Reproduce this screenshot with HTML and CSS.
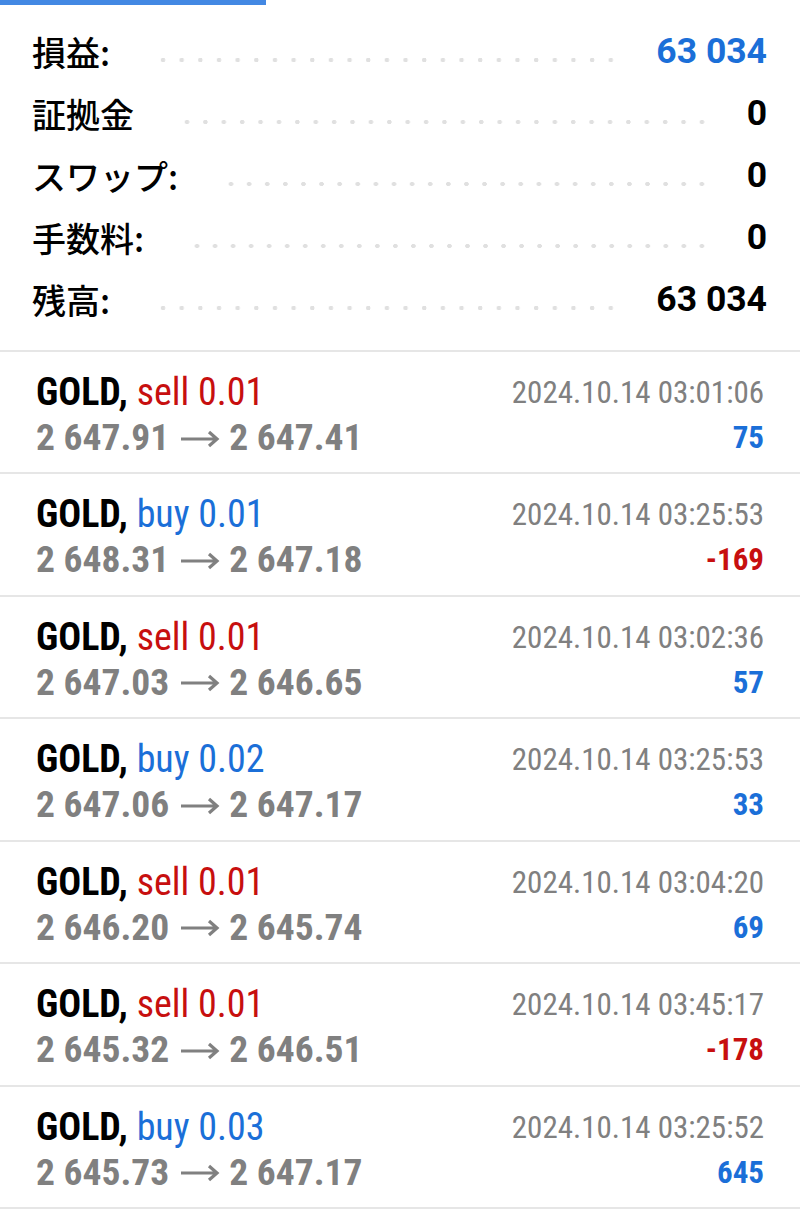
FILE: index.html
```html
<!doctype html>
<html>
  <head>
    <title>履歴</title>
    <link rel="stylesheet" href="styles.css">
  </head>
  <body>
    <div class="tab-indicator"></div>

    <div class="summary">
      <div class="summary-row">
        <span class="label">損益:</span><span class="dots"></span><span class="value value-blue">63 034</span>
      </div>
      <div class="summary-row">
        <span class="label">証拠金</span><span class="dots"></span><span class="value">0</span>
      </div>
      <div class="summary-row">
        <span class="label">スワップ:</span><span class="dots"></span><span class="value">0</span>
      </div>
      <div class="summary-row">
        <span class="label">手数料:</span><span class="dots"></span><span class="value">0</span>
      </div>
      <div class="summary-row">
        <span class="label">残高:</span><span class="dots"></span><span class="value">63 034</span>
      </div>
    </div>

    <div class="deals">
      <div class="deal">
        <div class="deal-left">
          <div class="deal-title"><b>GOLD,</b> <span class="sell">sell 0.01</span></div>
          <div class="deal-prices">2 647.91<svg class="arrow" viewBox="0 0 39 18"><path d="M0 9H36M28 2L36 9L28 16"/></svg>2 647.41</div>
        </div>
        <div class="deal-right">
          <div class="deal-time">2024.10.14 03:01:06</div>
          <div class="deal-profit plus">75</div>
        </div>
      </div>
      <div class="deal">
        <div class="deal-left">
          <div class="deal-title"><b>GOLD,</b> <span class="buy">buy 0.01</span></div>
          <div class="deal-prices">2 648.31<svg class="arrow" viewBox="0 0 39 18"><path d="M0 9H36M28 2L36 9L28 16"/></svg>2 647.18</div>
        </div>
        <div class="deal-right">
          <div class="deal-time">2024.10.14 03:25:53</div>
          <div class="deal-profit minus">-169</div>
        </div>
      </div>
      <div class="deal">
        <div class="deal-left">
          <div class="deal-title"><b>GOLD,</b> <span class="sell">sell 0.01</span></div>
          <div class="deal-prices">2 647.03<svg class="arrow" viewBox="0 0 39 18"><path d="M0 9H36M28 2L36 9L28 16"/></svg>2 646.65</div>
        </div>
        <div class="deal-right">
          <div class="deal-time">2024.10.14 03:02:36</div>
          <div class="deal-profit plus">57</div>
        </div>
      </div>
      <div class="deal">
        <div class="deal-left">
          <div class="deal-title"><b>GOLD,</b> <span class="buy">buy 0.02</span></div>
          <div class="deal-prices">2 647.06<svg class="arrow" viewBox="0 0 39 18"><path d="M0 9H36M28 2L36 9L28 16"/></svg>2 647.17</div>
        </div>
        <div class="deal-right">
          <div class="deal-time">2024.10.14 03:25:53</div>
          <div class="deal-profit plus">33</div>
        </div>
      </div>
      <div class="deal">
        <div class="deal-left">
          <div class="deal-title"><b>GOLD,</b> <span class="sell">sell 0.01</span></div>
          <div class="deal-prices">2 646.20<svg class="arrow" viewBox="0 0 39 18"><path d="M0 9H36M28 2L36 9L28 16"/></svg>2 645.74</div>
        </div>
        <div class="deal-right">
          <div class="deal-time">2024.10.14 03:04:20</div>
          <div class="deal-profit plus">69</div>
        </div>
      </div>
      <div class="deal">
        <div class="deal-left">
          <div class="deal-title"><b>GOLD,</b> <span class="sell">sell 0.01</span></div>
          <div class="deal-prices">2 645.32<svg class="arrow" viewBox="0 0 39 18"><path d="M0 9H36M28 2L36 9L28 16"/></svg>2 646.51</div>
        </div>
        <div class="deal-right">
          <div class="deal-time">2024.10.14 03:45:17</div>
          <div class="deal-profit minus">-178</div>
        </div>
      </div>
      <div class="deal">
        <div class="deal-left">
          <div class="deal-title"><b>GOLD,</b> <span class="buy">buy 0.03</span></div>
          <div class="deal-prices">2 645.73<svg class="arrow" viewBox="0 0 39 18"><path d="M0 9H36M28 2L36 9L28 16"/></svg>2 647.17</div>
        </div>
        <div class="deal-right">
          <div class="deal-time">2024.10.14 03:25:52</div>
          <div class="deal-profit plus">645</div>
        </div>
      </div>
    </div>
  </body>
</html>
```

FILE: styles.css
```css
body {
  margin: 0;
  padding: 0;
  background-color: white;
  color: black;
  font-family: Roboto, "Noto Sans CJK JP", sans-serif;
  overflow: hidden;
}

.tab-indicator {
  width: 266px;
  height: 5px;
  background-color: #4388e3;
}

/* summary block */
.summary {
  padding: 15px 33px 20px 32px;
}
.summary-row {
  display: flex;
  align-items: center;
  height: 62px;
}
.summary-row .label {
  font-family: "Noto Sans CJK JP", sans-serif;
  font-size: 34px;
  font-weight: 500;
}
.summary-row .dots {
  flex: 1;
  height: 6px;
  margin: 18px 36px 0 44px;
  background-image: radial-gradient(circle, #e0e0e0 2px, transparent 2.5px);
  background-size: 18px 6px;
  background-repeat: space no-repeat;
}
.summary-row .value {
  font-size: 35.5px;
  font-weight: 700;
}
.value-blue {
  color: #1b6fd8;
}

/* deal list */
.deals {
  border-top: 2px solid #e6e6e6;
}
.deal {
  display: flex;
  justify-content: space-between;
  padding: 18px 36px 12.45px 36px;
  border-bottom: 2px solid #e6e6e6;
  font-family: Roboto, sans-serif;
  font-stretch: 75%;
}
.deal-title,
.deal-prices,
.deal-time,
.deal-profit {
  height: 45px;
  line-height: 45px;
  white-space: nowrap;
}
.deal-title {
  font-size: 38px;
}
.deal-title b {
  font-weight: 700;
}
.deal-prices {
  display: flex;
  align-items: center;
  font-size: 37.5px;
  font-weight: 700;
  color: #808080;
}
.deal-prices .arrow {
  width: 39px;
  height: 18px;
  margin: 2px 9px 0 12px;
  fill: none;
  stroke: #808080;
  stroke-width: 3.2;
}
.deal-right {
  text-align: right;
}
.deal-time {
  font-size: 31px;
  color: #808080;
}
.deal-profit {
  font-size: 31px;
  font-weight: 700;
}
.sell,
.minus {
  color: #c70f0f;
}
.buy,
.plus {
  color: #1b6fd8;
}
```
